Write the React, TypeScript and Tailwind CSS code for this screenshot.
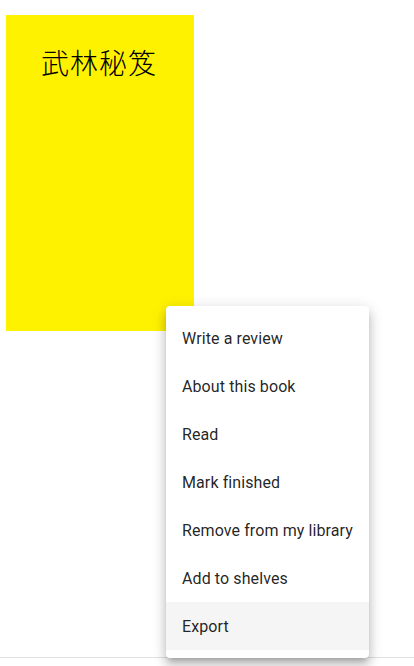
import React from 'react';

const ITEMS = [
  'Write a review',
  'About this book',
  'Read',
  'Mark finished',
  'Remove from my library',
  'Add to shelves',
  'Export',
];

export default function App() {
  return (
    <div className="relative h-[666px] w-[414px] bg-white font-['Roboto','Noto_Sans_CJK_SC',sans-serif]">
      {/* book row */}
      <div className="h-[658px] border-b border-[#e0e0e0] pl-[6px] pt-[15px]">
        <div className="flex h-[316px] w-[188px] justify-center bg-[#fff200] pt-[29px]">
          <span className="pr-[2px] font-['Noto_Sans_CJK_SC',sans-serif] text-[28px] font-light leading-[36px] tracking-[1px] text-black">
            武林秘笈
          </span>
        </div>
      </div>

      {/* context menu */}
      <div className="absolute left-[166px] top-[306px] w-[203px] rounded bg-white py-2 shadow-[0_5px_5px_-3px_rgba(0,0,0,0.2),0_8px_10px_1px_rgba(0,0,0,0.14),0_3px_14px_2px_rgba(0,0,0,0.12)]">
        {ITEMS.map((label) => (
          <div
            key={label}
            className={`flex h-12 items-center whitespace-nowrap px-4 pt-[2px] text-base tracking-[0.1px] text-[rgba(0,0,0,0.87)] ${
              label === 'Export' ? 'bg-[#f5f5f5]' : ''
            }`}
          >
            {label}
          </div>
        ))}
      </div>
    </div>
  );
}
